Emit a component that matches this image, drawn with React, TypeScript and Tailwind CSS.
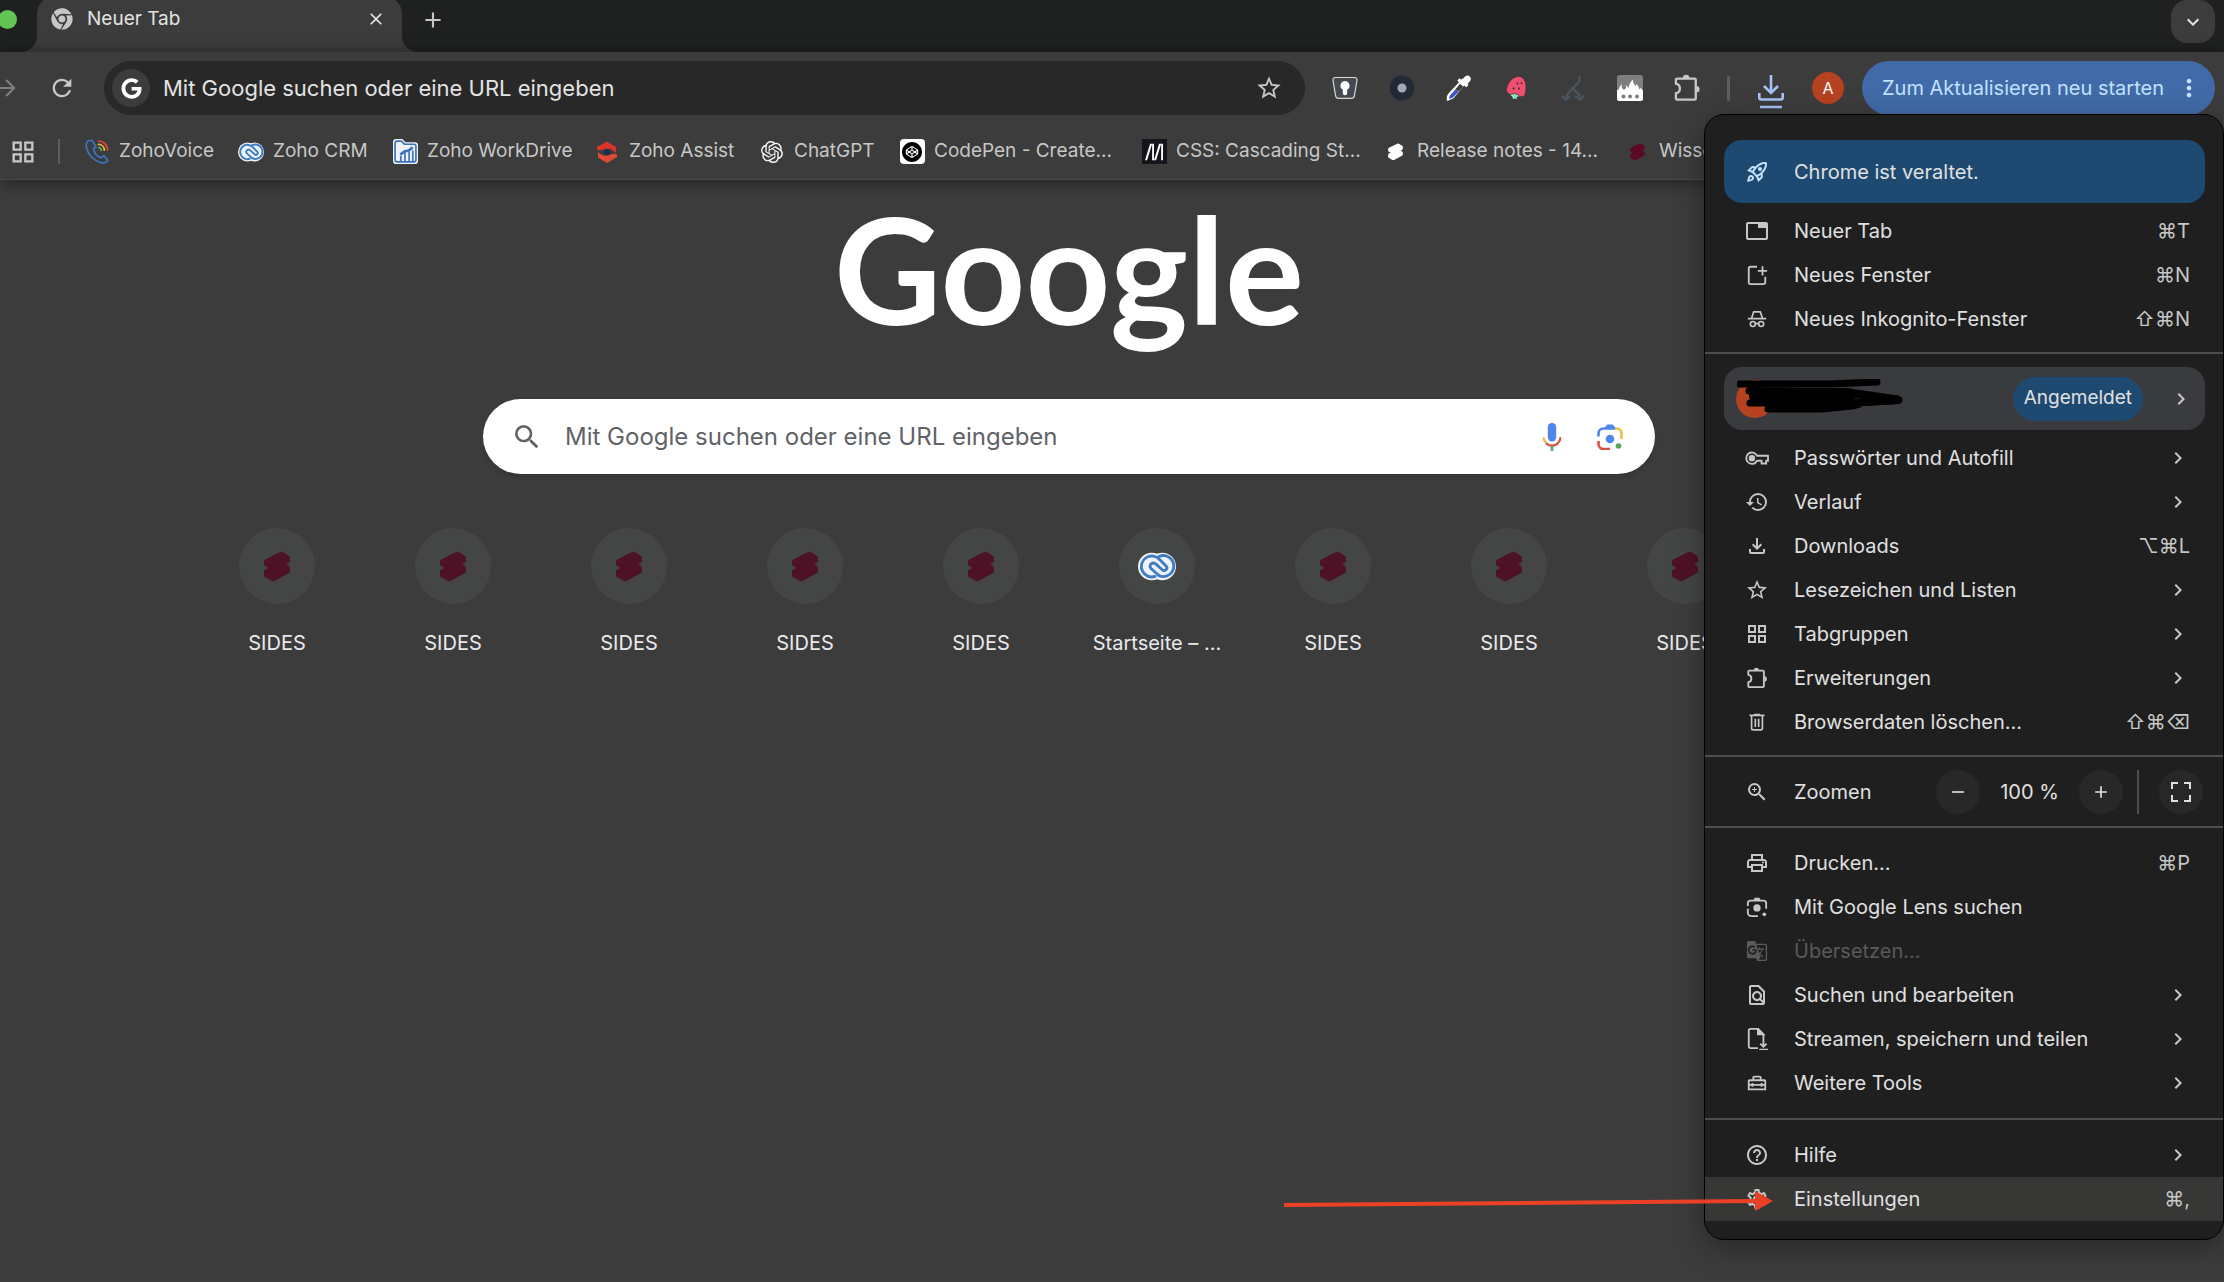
import React from "react"
import { FaChrome, FaGoogle } from "react-icons/fa"
import {
  MdAdd,
  MdArrowForward,
  MdChevronRight,
  MdClose,
  MdExpandMore,
  MdHelpOutline,
  MdHistory,
  MdMoreVert,
  MdOutlineFileDownload,
  MdOutlineFindInPage,
  MdOutlineGridView,
  MdOutlineHomeRepairService,
  MdOutlinePrint,
  MdOutlineRocketLaunch,
  MdOutlineSettings,
  MdGTranslate,
  MdRefresh,
  MdRemove,
  MdSearch,
  MdStarBorder,
  MdTab,
  MdZoomIn,
} from "react-icons/md"
import { SiCodepen, SiMdnwebdocs, SiOpenai } from "react-icons/si"

interface IconProps {
  className?: string
}

const SidesIcon: React.FC<IconProps> = ({ className }) => (
  <svg viewBox="0 0 28 30" className={className} fill="currentColor" aria-hidden="true">
    <path d="M17 1.4a3 3 0 0 1 3.200 0l5.500 3.600a2.500 2.500 0 0 1 1.300 2.100v3.300c0 1.200-.7 2-1.600 2.600L23 14.500l2.600 1.300a2.600 2.600 0 0 1 1.400 2.300v3.100c0 1.200-.6 2-1.500 2.600l-14 8a3 3 0 0 1-3-.1l-6-3.600A2.500 2.500 0 0 1 1 26v-3.800c0-1 .6-1.900 1.500-2.400L5.500 18l-3-1.600A2.500 2.500 0 0 1 1 14.200v-2.700c0-1.200.6-2 1.500-2.600z" transform="scale(1 .94)" />
  </svg>
)

const ZohoCrmIcon: React.FC<IconProps> = ({ className }) => (
  <svg viewBox="0 0 40 30" className={className} fill="none" aria-hidden="true">
    <circle cx="14.500" cy="15" r="14.500" fill="#eef3f9" />
    <circle cx="25.500" cy="15" r="14.500" fill="#eef3f9" />
    <g stroke="#3f7cc0" strokeWidth="3" strokeLinecap="round">
      <path d="M18 25.400A11 11 0 1 1 23 8l6.500 6.500c2.600 2.700-1.300 6.500-4 4L19 12.500c-3.500-3.200-8.500 1-5.300 4.600L22 24.500" />
      <path d="M22 4.600A11 11 0 1 1 22 24.500" />
    </g>
  </svg>
)

const ZohoVoiceIcon: React.FC<IconProps> = ({ className }) => (
  <svg viewBox="0 0 24 24" className={className} fill="none" strokeLinecap="round" aria-hidden="true">
    <path
      stroke="#3b72b8"
      strokeWidth="1.800"
      strokeLinejoin="round"
      d="M3.500 1.500C1.500 2.800.8 5 1.300 7.500c1.500 7 6.500 12.800 13.700 15.200 2.700.8 5.300.2 7-2.200l-4-4.500-3 2c-3.500-1.400-6-4.800-7-8.500l2.500-2L7 1.500z"
    />
    <path stroke="#d9453a" strokeWidth="1.800" d="M13 2c4.500 0 8.500 3.500 8.800 8.500" />
    <path stroke="#e9b23c" strokeWidth="1.800" d="M13 5.200c3 .1 5.400 2.400 5.600 5.500" />
    <path stroke="#56a35c" strokeWidth="1.800" d="M13 8.300c1.400.1 2.500 1.200 2.600 2.600" />
  </svg>
)

const WorkDriveIcon: React.FC<IconProps> = ({ className }) => (
  <svg viewBox="0 0 24 24" className={className} fill="none" aria-hidden="true">
    <path fill="#eef3f9" d="M0 3a3 3 0 0 1 3-3h6l3 3h9a3 3 0 0 1 3 3v15a3 3 0 0 1-3 3H3a3 3 0 0 1-3-3z" />
    <path stroke="#3b72b8" strokeWidth="1.600" d="M2 4a2 2 0 0 1 2-2h4l3 3h9a2 2 0 0 1 2 2v13a2 2 0 0 1-2 2H4a2 2 0 0 1-2-2z" />
    <path stroke="#3b72b8" strokeWidth="1.600" d="M7.500 21v-5M11.500 21v-8M15.500 21v-9M19 21V11" />
    <path stroke="#3b72b8" strokeWidth="2.600" d="m7 15 4-3 4-1 4-3" />
  </svg>
)

const ZohoAssistIcon: React.FC<IconProps> = ({ className }) => (
  <svg viewBox="0 0 24 24" className={className} aria-hidden="true">
    <path fill="#d9352b" d="M12 1.500 21 7v6c-3-3-6-4.500-9-4.200S5 11.500 2 9.500V7z" />
    <path fill="#e04a36" d="M22 14.500V17l-10 6-9-5.500V12c3 3 5.500 4 9 3.700s7-3.200 10-1.200z" />
    <circle cx="12" cy="12" r="3" fill="#1f2c52" />
  </svg>
)

const BitwardenLikeIcon = () => (
  <svg viewBox="0 0 26 24" className="h-6 w-7" aria-hidden="true">
    <path fill="#454a50" stroke="#d8d8d8" strokeWidth="1.200" d="M3.500 1.500h19a2.500 2.500 0 0 1 2.500 3l-2.600 15.300a3 3 0 0 1-3 2.500H6.600a3 3 0 0 1-3-2.500L1 4.500a2.500 2.500 0 0 1 2.500-3z" />
    <path fill="#fff" d="M13 5a4.600 4.600 0 0 1 2.200 8.600V17a2.200 2.200 0 0 1-4.400 0v-3.400A4.600 4.600 0 0 1 13 5z" />
  </svg>
)

const DotIcon = () => (
  <svg viewBox="0 0 26 26" className="size-[26px]" aria-hidden="true">
    <circle cx="13" cy="13" r="12.500" fill="#222a38" />
    <circle cx="13" cy="13" r="4.500" fill="#a5a9b6" />
  </svg>
)

const PipetteIcon = () => (
  <svg viewBox="0 0 26 26" className="size-[26px]" aria-hidden="true">
    <path fill="#fff" d="M17.500 3.200c2-2.800 4.200-3.500 6-2 2 1.700 1.800 4-.7 6.300l-1.300 1.200 1 1.300-2.300 2.300-2-1.700L7.500 23.200 2 25.800H.8v-4.300l1.400-2.700L13 7.300l-1.700-1.800 2-2.200 1.700 1.200z" />
    <path fill="#3c50c8" d="m8.500 15.500 5 .3-6.300 6.400-3.600 1.700-.3-1.300 1-2.500z" />
    <path fill="#3c3c3c" d="m14 8.800 3.300 3-3.800 4-5-.3z" />
  </svg>
)

const BerryIcon = () => (
  <svg viewBox="0 0 24 26" className="size-[26px]" aria-hidden="true">
    <path fill="#ee4f70" stroke="#2d2d2d" strokeWidth=".6" d="M2.500 14C4 7 9 1.500 14.500 1.500c5 0 7.500 5 7.500 10 0 3-.5 7-1.500 9.500-3 1.200-9 .8-13-.8-2.600-1-5.500-3-5-6.200z" />
    <path fill="#8fe3bb" stroke="#2d2d2d" strokeWidth=".8" d="M6 20.500c2-2 4-2.300 6-1.500 2 .4 3 1.500 3.500 2.800l-2.500.4 1 2.300-3-.6-2.500.8-.4-2.700z" />
    <path stroke="#2d2d2d" strokeWidth="1.500" strokeLinecap="round" d="M13.500 8v1M9.500 13v1M15 13v1M17.500 8v.5" />
  </svg>
)

const BranchIcon = () => (
  <svg viewBox="0 0 24 26" className="size-[26px] text-[#4c565f]" fill="none" stroke="currentColor" aria-hidden="true">
    <path strokeWidth="2.200" d="M18.500 1v4.500c0 3.500-12.500 10-13.500 18M10.500 13c5 3 7.500 5.500 9 10" />
    <path strokeWidth="2" d="m1 21 4 4 4.500-4M14 21l5.500 4 3.500-4.500" />
  </svg>
)

const FlameIcon = () => (
  <svg viewBox="0 0 26 26" className="size-[26px]" aria-hidden="true">
    <rect width="26" height="26" rx="2.500" fill="#7e7e7e" />
    <path fill="#fff" d="M0 15c1 .2 1.700-.3 2-1.500.7-2.200 1.300-3.200 3-4-.6 2.500.2 5 2 5 2.300 0 2-2.800 1.800-4.500 1.300 1.200 2 2 2.400 3C12.500 9.500 13 7 15.800 4.500c-.2 3.500 2.200 4 2.200 7 .8-.6 1-1.600 1-2.500 2.200 1.500 3 3.500 3.500 5.500.5-.4 1-1 1-1.800 1.200 1 2 2.300 2.500 3.300v7.500a2.500 2.500 0 0 1-2.500 2.500h-21A2.500 2.500 0 0 1 0 23.500z" />
    <g fill="#7e7e7e">
      <circle cx="6.500" cy="21.500" r="2" />
      <circle cx="13" cy="21.500" r="2" />
      <circle cx="20" cy="21.500" r="2" />
    </g>
  </svg>
)

const PuzzleIcon: React.FC<IconProps> = ({ className }) => (
  <svg viewBox="0 0 24 24" className={className} fill="none" aria-hidden="true">
    <path
      stroke="currentColor"
      strokeWidth="2"
      strokeLinejoin="round"
      d="M3.500 4h15a1 1 0 0 1 1 1v16a1 1 0 0 1-1 1h-15a1 1 0 0 1-1-1v-4.500c4.500-.5 4.500-7.500 0-8V5a1 1 0 0 1 1-1z"
    />
    <path fill="currentColor" d="M8.500 3.500a2.800 2.800 0 0 1 5.600 0zM20 10.200a2.800 2.800 0 0 1 0 5.600z" />
  </svg>
)

const NewWindowIcon: React.FC<IconProps> = ({ className }) => (
  <svg viewBox="0 0 24 24" className={className} fill="none" stroke="currentColor" strokeWidth="2" aria-hidden="true">
    <path d="M12 3H5a2 2 0 0 0-2 2v15a2 2 0 0 0 2 2h14a2 2 0 0 0 2-2v-6M18 2.500v10M13 7.500h10" />
  </svg>
)

const IncognitoIcon: React.FC<IconProps> = ({ className }) => (
  <svg viewBox="0 0 24 24" className={className} fill="none" stroke="currentColor" strokeWidth="2" aria-hidden="true">
    <path d="M1 11.500h22M5.500 11 8 3.500h8l2.500 7.500M10 18c1.300-.9 2.700-.9 4 0" />
    <circle cx="7" cy="18" r="3" />
    <circle cx="17" cy="18" r="3" />
  </svg>
)

const KeyIcon: React.FC<IconProps> = ({ className }) => (
  <svg viewBox="0 0 26 24" className={className} fill="none" stroke="currentColor" strokeWidth="2" aria-hidden="true">
    <path d="M13 9.500A6.200 6.200 0 1 0 13 15h5v3h5v-3h2V9.500z" />
    <circle cx="7.500" cy="12.200" r="2.500" fill="currentColor" />
  </svg>
)

const TrashIcon: React.FC<IconProps> = ({ className }) => (
  <svg viewBox="0 0 24 24" className={className} fill="none" stroke="currentColor" strokeWidth="2" aria-hidden="true">
    <path d="M3 4h18M8.500 3h7M5.500 4v15.500a2 2 0 0 0 2 2h9a2 2 0 0 0 2-2V4M10 8v10M14 8v10" />
  </svg>
)

const LensIcon: React.FC<IconProps> = ({ className }) => (
  <svg viewBox="0 0 24 24" className={className} fill="none" stroke="currentColor" strokeWidth="2" aria-hidden="true">
    <path d="M2 11V8a3 3 0 0 1 3-3h14a3 3 0 0 1 3 3v6M2 14v4a4 4 0 0 0 4 4h7" />
    <path fill="currentColor" stroke="none" d="M8 4.500 9.500 2h5L16 4.500z" />
    <circle cx="12" cy="13" r="4" fill="currentColor" stroke="none" />
    <circle cx="20" cy="20" r="2" fill="currentColor" stroke="none" />
  </svg>
)

const SavePageIcon: React.FC<IconProps> = ({ className }) => (
  <svg viewBox="0 0 24 24" className={className} fill="none" stroke="currentColor" strokeWidth="2" aria-hidden="true">
    <path d="M13 22H5a2 2 0 0 1-2-2V3a2 2 0 0 1 2-2h8l6 6v5" />
    <path fill="currentColor" d="M13 1v6h6z" />
    <path d="M19 12v8M15.500 17l3.500 3.500 3.500-3.500M14.500 23.500H24" />
  </svg>
)

const FullscreenIcon: React.FC<IconProps> = ({ className }) => (
  <svg viewBox="0 0 20 20" className={className} fill="none" stroke="currentColor" strokeWidth="2" aria-hidden="true">
    <path d="M1 7V1h6M13 1h6v6M19 13v6h-6M7 19H1v-6" />
  </svg>
)

const MicIcon = () => (
  <svg viewBox="0 0 20 28" className="h-7 w-5" fill="none" strokeWidth="2.200" aria-hidden="true">
    <rect x="5.800" width="8.400" height="18.500" rx="4.200" fill="#4f86ec" />
    <path stroke="#f0bc42" d="M1.600 14.300c0 2.600 1 4.500 2.600 5.900" />
    <path stroke="#da4f41" d="M4 20c3 3.500 9 3.500 12 0 1.500-1.300 2.400-3.300 2.400-5.700" />
    <path stroke="#58a55c" strokeWidth="2.600" d="M10 23v5" />
  </svg>
)

const ColorLensIcon = () => (
  <svg viewBox="0 0 26 26" className="size-[26px]" fill="none" strokeWidth="2.600" aria-hidden="true">
    <path stroke="#4f86ec" d="M1.500 12.500V9.500a5 5 0 0 1 5-5h12" />
    <path fill="#4f86ec" d="M7.500 4.500 9.300 1.500A2 2 0 0 1 11 .6h4a2 2 0 0 1 1.700.9l1.800 3z" />
    <path stroke="#f0bc42" d="M18.500 4.500h1a5 5 0 0 1 5 5v5.500" />
    <path stroke="#da4f41" d="M1.500 17v3a5 5 0 0 0 5 5H13" />
    <circle cx="13" cy="15" r="4.300" fill="#4f86ec" />
    <circle cx="21.500" cy="22" r="2.800" fill="#58a55c" />
  </svg>
)

const DownloadTrayIcon = () => (
  <svg viewBox="0 0 26 34" className="h-[34px] w-[26px]" fill="none" stroke="#a8c1f5" strokeWidth="2.600" aria-hidden="true">
    <path d="M13 0v17M6 11l7 7 7-7M1.300 18v4.500a2 2 0 0 0 2 2h19.400a2 2 0 0 0 2-2V18M2 32h22" />
  </svg>
)

const bookmarks = [
  { label: "ZohoVoice", width: "w-[154px]", icon: <ZohoVoiceIcon className="size-[25px]" /> },
  { label: "Zoho CRM", width: "w-[154px]", icon: <ZohoCrmIcon className="h-5 w-[26px]" /> },
  { label: "Zoho WorkDrive", width: "w-[202px]", icon: <WorkDriveIcon className="size-[25px]" /> },
  { label: "Zoho Assist", width: "w-[165px]", icon: <ZohoAssistIcon className="size-6" /> },
  { label: "ChatGPT", width: "w-[140px]", icon: <SiOpenai className="size-[22px] text-gray-100" /> },
  {
    label: "CodePen - Create...",
    width: "w-[242px]",
    icon: (
      <span className="flex size-[25px] items-center justify-center rounded-sm bg-white">
        <SiCodepen className="size-5 text-black" />
      </span>
    ),
  },
  {
    label: "CSS: Cascading St...",
    width: "w-[241px]",
    icon: (
      <span className="flex size-[25px] items-center justify-center bg-[#15141a]">
        <SiMdnwebdocs className="size-[18px] text-white" />
      </span>
    ),
  },
  { label: "Release notes - 14...", width: "w-[242px]", icon: <SidesIcon className="size-[17px] text-white" /> },
  { label: "Wissensdatenbank", width: "w-[242px]", icon: <SidesIcon className="size-[17px] text-[#5a0a24]" /> },
]

const shortcuts = ["SIDES", "SIDES", "SIDES", "SIDES", "SIDES", "Startseite – ...", "SIDES", "SIDES", "SIDES", "SIDES"]

interface MenuItemProps {
  icon: React.ReactNode
  label: string
  keys?: string
  submenu?: boolean
  disabled?: boolean
  active?: boolean
}

const MenuItem: React.FC<MenuItemProps> = ({ icon, label, keys, submenu, disabled, active }) => (
  <button
    type="button"
    disabled={disabled}
    className={`flex h-11 w-full items-center pr-[33px] pl-10 text-left ${active ? "bg-[#373735]" : ""} ${
      disabled ? "text-[#5a5a5a]" : "text-[#e0e0e0]"
    }`}
  >
    <span className={`flex w-6 justify-center ${disabled ? "" : "text-[#c7c7c7]"}`}>{icon}</span>
    <span className="ml-[25px] flex-1">{label}</span>
    {keys && <span className="text-[#c7c7c7]">{keys}</span>}
    {submenu && <MdChevronRight className="size-6 text-[#c7c7c7]" />}
  </button>
)

const Divider = () => <hr className="my-[13px] border-t-2 border-[#4d4d4d]" />

const TabStrip = () => (
  <div className="flex h-[52px] overflow-hidden bg-[#1f2120]">
    <span className="mt-[10px] -ml-[2px] size-[19px] rounded-full bg-[#62c655]" />
    <div className="relative -mt-1 ml-5 flex w-[365px] items-center rounded-t-[18px] bg-[#3c3c3c] pr-4 pb-[10px] pl-[14px]">
      <span className="absolute bottom-0 -left-4 size-4 bg-[#3c3c3c]">
        <span className="block size-4 rounded-br-2xl bg-[#1f2120]" />
      </span>
      <span className="absolute -right-4 bottom-0 size-4 bg-[#3c3c3c]">
        <span className="block size-4 rounded-bl-2xl bg-[#1f2120]" />
      </span>
      <FaChrome className="size-[22px] text-[#c7c7c7]" />
      <span className="ml-[14px] flex-1 text-[19px] text-[#e3e3e3]">Neuer Tab</span>
      <button type="button" aria-label="Tab schließen">
        <MdClose className="size-5 text-[#e3e3e3]" />
      </button>
    </div>
    <button type="button" aria-label="Neuer Tab" className="mb-3 ml-[18px]">
      <MdAdd className="size-[26px] text-[#c7c7c7]" />
    </button>
    <button
      type="button"
      aria-label="Tabs durchsuchen"
      className="mr-[9px] ml-auto flex h-[43px] w-11 items-center justify-center rounded-2xl bg-[#3c3c3c]"
    >
      <MdExpandMore className="size-6 text-[#e3e3e3]" />
    </button>
  </div>
)

const Toolbar = () => (
  <div className="flex h-[72px] items-center pr-[9px]">
    <button type="button" aria-label="Vorwärts" className="-ml-[6px] text-[#7e7e7e]">
      <MdArrowForward className="size-[26px]" />
    </button>
    <button type="button" aria-label="Neu laden" className="ml-7 text-[#c7c7c7]">
      <MdRefresh className="size-7" />
    </button>
    <div className="ml-7 flex h-[54px] flex-1 items-center rounded-full bg-[#282828] pr-[22px] pl-2">
      <span className="flex size-[38px] items-center justify-center rounded-full bg-[#3c3c3c]">
        <FaGoogle className="size-[21px] text-white" />
      </span>
      <input
        type="text"
        aria-label="Adresszeile"
        placeholder="Mit Google suchen oder eine URL eingeben"
        className="ml-[13px] flex-1 bg-transparent text-[22px] outline-none placeholder:text-[#e3e3e3]"
      />
      <button type="button" aria-label="Lesezeichen hinzufügen" className="text-[#c7c7c7]">
        <MdStarBorder className="size-[28px]" />
      </button>
    </div>
    <div className="ml-[26px] flex items-center">
      {[
        <BitwardenLikeIcon key="vault" />,
        <DotIcon key="dot" />,
        <PipetteIcon key="pipette" />,
        <BerryIcon key="berry" />,
        <BranchIcon key="branch" />,
        <FlameIcon key="flame" />,
        <PuzzleIcon key="puzzle" className="size-7 text-[#c7c7c7]" />,
      ].map((icon, i) => (
        <button key={i} type="button" aria-label={`Erweiterung ${i + 1}`} className="mr-[29px] flex w-7 justify-center">
          {icon}
        </button>
      ))}
    </div>
    <span className="-ml-[3px] h-[25px] w-[3px] rounded bg-[#5e5e5e]" />
    <button type="button" aria-label="Downloads" className="mt-2 ml-[28px]">
      <DownloadTrayIcon />
    </button>
    <button
      type="button"
      aria-label="Profil"
      className="ml-7 flex size-8 items-center justify-center rounded-full bg-[#b54221] text-base text-white"
    >
      A
    </button>
    <button
      type="button"
      className="ml-[18px] flex h-[54px] w-[353px] items-center justify-between rounded-full bg-[#416ba8] pr-3 pl-5 text-[20px] text-[#c2e2ff]"
    >
      <span className="whitespace-nowrap">Zum Aktualisieren neu starten</span>
      <MdMoreVert className="size-[28px] shrink-0" />
    </button>
  </div>
)

const BookmarkBar = () => (
  <nav className="flex h-[56px] items-center overflow-hidden border-b border-[#4a4a4a] pl-[9px] text-[19px] text-[#c7c7c7]">
    <button type="button" aria-label="Alle Tabgruppen">
      <MdOutlineGridView className="size-[28px]" />
    </button>
    <span className="mr-6 ml-[21px] h-[25px] w-[2px] shrink-0 bg-[#5e5e5e]" />
    {bookmarks.map(({ label, width, icon }) => (
      <a key={label} href="#" className={`flex shrink-0 items-center gap-[9px] whitespace-nowrap ${width}`}>
        <span className="flex w-[26px] shrink-0 justify-center">{icon}</span>
        {label}
      </a>
    ))}
  </nav>
)

const NewTabPage = () => (
  <main className="flex flex-col items-center pr-[86px]">
    <h1 className="h-[219px] pt-[14px] font-[Lato,sans-serif] text-[148px] leading-none font-bold text-white">Google</h1>
    <div className="flex h-[75px] w-full max-w-[1172px] items-center rounded-full bg-white pr-8 pl-[28px] shadow-md">
      <MdSearch className="size-8 text-[#5f6368]" />
      <input
        type="text"
        aria-label="Suche"
        placeholder="Mit Google suchen oder eine URL eingeben"
        className="ml-[22px] flex-1 bg-transparent text-[24px] outline-none placeholder:text-[#5f6368]"
      />
      <button type="button" aria-label="Sprachsuche">
        <MicIcon />
      </button>
      <button type="button" aria-label="Bildersuche" className="ml-[35px]">
        <ColorLensIcon />
      </button>
    </div>
    <div className="mt-[54px] grid w-full max-w-[1760px] grid-cols-10">
      {shortcuts.map((label, i) => (
        <a key={i} href="#" className="flex flex-col items-center text-[20px] text-[#e8eaed]">
          <span className="mb-6 flex size-[76px] items-center justify-center rounded-full bg-[#444645]">
            {label === "SIDES" ? (
              <SidesIcon className="h-[30px] w-[28px] text-[#4f1225]" />
            ) : (
              <ZohoCrmIcon className="h-[29px] w-[38px]" />
            )}
          </span>
          {label}
        </a>
      ))}
    </div>
  </main>
)

const ChromeMenu = () => (
  <div className="absolute top-[114px] right-0 w-[520px] rounded-[20px] border border-black bg-[#1f1f1f] pt-[25px] pb-[18px] text-[20px] shadow-[0_8px_30px_rgba(0,0,0,0.35)]">
    <button
      type="button"
      className="mx-[19px] mb-[6px] flex h-[63px] w-[481px] items-center rounded-[18px] bg-[#1e4a72] pl-[21px] text-[#e0e0e0]"
    >
      <span className="flex w-6 justify-center text-[#c2e2ff]">
        <MdOutlineRocketLaunch className="size-6" />
      </span>
      <span className="ml-[25px]">Chrome ist veraltet.</span>
    </button>
    <MenuItem icon={<MdTab className="size-6" />} label="Neuer Tab" keys="⌘T" />
    <MenuItem icon={<NewWindowIcon className="size-[22px]" />} label="Neues Fenster" keys="⌘N" />
    <MenuItem icon={<IncognitoIcon className="size-5" />} label="Neues Inkognito-Fenster" keys="⇧⌘N" />
    <hr className="mt-[11px] mb-[13px] border-t-2 border-[#4d4d4d]" />
    <button
      type="button"
      className="relative mx-[19px] mb-[6px] flex h-[63px] w-[481px] items-center rounded-[18px] bg-[#3a3b3e] pr-3 pl-3 text-[#e0e0e0]"
    >
      <span className="size-[38px] rounded-full bg-[#b54221]" />
      <svg
        viewBox="0 0 166 34"
        className="absolute top-3 left-[13px] h-[34px] w-[166px]"
        fill="none"
        stroke="#000"
        strokeLinecap="round"
        strokeLinejoin="round"
        aria-hidden="true"
      >
        <path strokeWidth="7" d="M3 5h90l47-2M12 12l100 1 48 7c4 1 2 2-5 2l-38 2H13M31 30h54l30-3 8-2" />
        <path strokeWidth="16" d="M20 17h90" />
        <path strokeWidth="7" d="m110 15 50 5M112 24l42-2" />
      </svg>
      <span className="ml-auto flex h-11 items-center rounded-full bg-[#1e4a72] px-[11px] text-[19px]">Angemeldet</span>
      <MdChevronRight className="ml-[26px] size-6 text-[#c7c7c7]" />
    </button>
    <MenuItem icon={<KeyIcon className="h-[22px] w-6 shrink-0" />} label="Passwörter und Autofill" submenu />
    <MenuItem icon={<MdHistory className="size-6" />} label="Verlauf" submenu />
    <MenuItem icon={<MdOutlineFileDownload className="size-6" />} label="Downloads" keys="⌥⌘L" />
    <MenuItem icon={<MdStarBorder className="size-6" />} label="Lesezeichen und Listen" submenu />
    <MenuItem icon={<MdOutlineGridView className="size-6" />} label="Tabgruppen" submenu />
    <MenuItem icon={<PuzzleIcon className="size-[22px]" />} label="Erweiterungen" submenu />
    <MenuItem icon={<TrashIcon className="size-5" />} label="Browserdaten löschen..." keys="⇧⌘⌫" />
    <hr className="mt-[11px] mb-[13px] border-t-2 border-[#4d4d4d]" />
    <div className="flex h-11 items-center pr-5 pl-10 text-[#e0e0e0]">
      <MdZoomIn className="size-6 text-[#c7c7c7]" />
      <span className="ml-[25px] flex-1">Zoomen</span>
      <button type="button" aria-label="Verkleinern" className="flex size-11 items-center justify-center rounded-full bg-[#282828]">
        <MdRemove className="size-5" />
      </button>
      <span className="w-[99px] text-center">100 %</span>
      <button type="button" aria-label="Vergrößern" className="flex size-11 items-center justify-center rounded-full bg-[#282828]">
        <MdAdd className="size-5" />
      </button>
      <span className="mr-5 ml-[14px] h-11 w-[2px] bg-[#4d4d4d]" />
      <button type="button" aria-label="Vollbild" className="flex size-11 items-center justify-center rounded-full bg-[#282828]">
        <FullscreenIcon className="size-5" />
      </button>
    </div>
    <hr className="mt-3 mb-[13px] border-t-2 border-[#4d4d4d]" />
    <MenuItem icon={<MdOutlinePrint className="size-6" />} label="Drucken..." keys="⌘P" />
    <MenuItem icon={<LensIcon className="size-[22px]" />} label="Mit Google Lens suchen" />
    <MenuItem icon={<MdGTranslate className="size-[22px]" />} label="Übersetzen..." disabled />
    <MenuItem icon={<MdOutlineFindInPage className="size-6" />} label="Suchen und bearbeiten" submenu />
    <MenuItem icon={<SavePageIcon className="size-[22px]" />} label="Streamen, speichern und teilen" submenu />
    <MenuItem icon={<MdOutlineHomeRepairService className="size-[22px]" />} label="Weitere Tools" submenu />
    <Divider />
    <MenuItem icon={<MdHelpOutline className="size-6" />} label="Hilfe" submenu />
    <MenuItem icon={<MdOutlineSettings className="size-6" />} label="Einstellungen" keys="⌘," active />
    <svg viewBox="0 0 490 20" className="absolute right-[449px] bottom-7 h-5 w-[490px]" aria-hidden="true">
      <path d="M1 14 472 10" stroke="#eb4026" strokeWidth="4" strokeLinecap="round" />
      <path d="M471 0v20l18-10z" fill="#eb4026" />
    </svg>
  </div>
)

export default function App() {
  return (
    <div className="relative min-h-screen overflow-hidden bg-[#3c3c3c] font-[Inter,'DejaVu_Sans',sans-serif]">
      <TabStrip />
      <div className="relative shadow-[0_2px_16px_rgba(0,0,0,0.45)]">
        <Toolbar />
        <BookmarkBar />
      </div>
      <NewTabPage />
      <ChromeMenu />
    </div>
  )
}
